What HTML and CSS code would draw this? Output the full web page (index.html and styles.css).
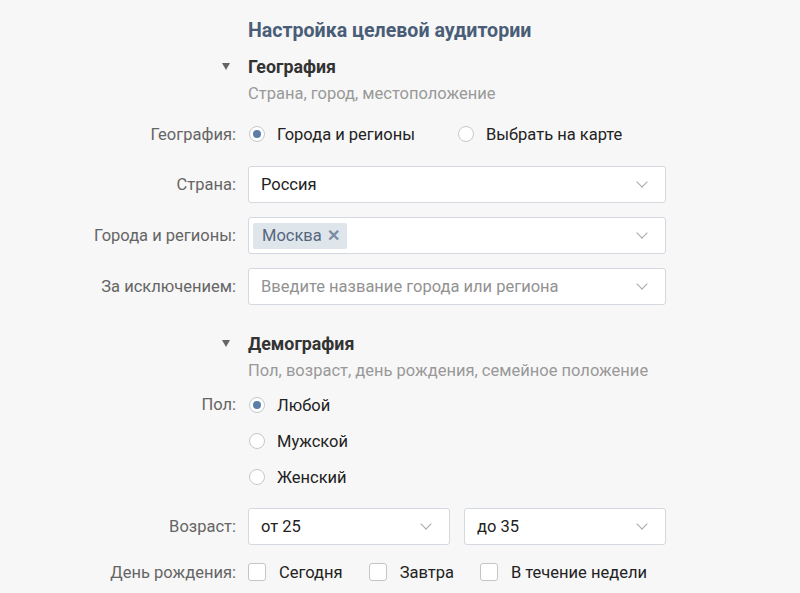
FILE: index.html
```html
<!DOCTYPE html>
<html>
<head>
    <title>Настройка целевой аудитории</title>
    <link rel="stylesheet" href="styles.css">
</head>
<body>
    <div class="page">
        <div class="row title-row">
            <div class="label"></div>
            <h1 class="title">Настройка целевой аудитории</h1>
        </div>

        <div class="row section-head">
            <div class="label"><span class="arrow"></span></div>
            <div class="section-name">География</div>
        </div>
        <div class="row section-sub">
            <div class="label"></div>
            <div class="hint">Страна, город, местоположение</div>
        </div>

        <div class="row line geo-type">
            <div class="label">География:</div>
            <div class="options">
                <label class="radio checked"><span class="circle"></span>Города и регионы</label>
                <label class="radio"><span class="circle"></span>Выбрать на карте</label>
            </div>
        </div>

        <div class="row field country">
            <div class="label">Страна:</div>
            <div class="select"><span class="value">Россия</span><span class="chevron"></span></div>
        </div>

        <div class="row field cities">
            <div class="label">Города и регионы:</div>
            <div class="select tags"><span class="tag">Москва<span class="tag-x">✕</span></span><span class="chevron"></span></div>
        </div>

        <div class="row field except">
            <div class="label">За исключением:</div>
            <div class="select"><span class="value placeholder">Введите название города или региона</span><span class="chevron"></span></div>
        </div>

        <div class="row section-head demo">
            <div class="label"><span class="arrow"></span></div>
            <div class="section-name">Демография</div>
        </div>
        <div class="row section-sub">
            <div class="label"></div>
            <div class="hint">Пол, возраст, день рождения, семейное положение</div>
        </div>

        <div class="row line sex">
            <div class="label">Пол:</div>
            <div class="stack">
                <label class="radio checked"><span class="circle"></span>Любой</label>
                <label class="radio"><span class="circle"></span>Мужской</label>
                <label class="radio"><span class="circle"></span>Женский</label>
            </div>
        </div>

        <div class="row field age">
            <div class="label">Возраст:</div>
            <div class="pair">
                <div class="select"><span class="value">от 25</span><span class="chevron"></span></div>
                <div class="select"><span class="value">до 35</span><span class="chevron"></span></div>
            </div>
        </div>

        <div class="row line birthday">
            <div class="label">День рождения:</div>
            <div class="options">
                <label class="check"><span class="box"></span>Сегодня</label>
                <label class="check"><span class="box"></span>Завтра</label>
                <label class="check"><span class="box"></span>В течение недели</label>
            </div>
        </div>
    </div>
</body>
</html>
```

FILE: styles.css
```css
body {
    margin: 0;
    background-color: #f7f7f7;
    font-family: Roboto, "Liberation Sans", sans-serif;
    font-size: 16.5px;
    color: #222;
}

.page {
    width: 666px;
    padding-top: 19px;
}

.row {
    display: flex;
    align-items: center;
    gap: 12px;
    white-space: nowrap;
}

.label {
    width: 236px;
    flex-shrink: 0;
    text-align: right;
    color: #656565;
}

.title {
    margin: 0;
    font-size: 19.6px;
    line-height: 24px;
    font-weight: bold;
    color: #4a5d78;
}

.section-head {
    margin-top: 12px;
    height: 22px;
}

.section-head.demo {
    margin-top: 27px;
}

.section-head .label {
    display: flex;
    justify-content: flex-end;
    padding-right: 6px;
    box-sizing: border-box;
}

.arrow {
    width: 0;
    height: 0;
    border-left: 4px solid transparent;
    border-right: 4px solid transparent;
    border-top: 7px solid #656565;
}

.section-name {
    font-size: 17.8px;
    font-weight: bold;
    color: #333;
}

.section-sub {
    margin-top: 6px;
    height: 20px;
}

.hint {
    color: #999;
}

.line {
    height: 24px;
}

.geo-type {
    margin-top: 19px;
}

.options {
    display: flex;
    align-items: center;
}

.radio {
    display: flex;
    align-items: center;
    gap: 12px;
    height: 24px;
    margin-right: 42px;
}

.circle {
    width: 14px;
    height: 14px;
    border: 1px solid #c3c9d0;
    border-radius: 50%;
    background: #fff;
    margin-left: 1px;
    position: relative;
}

.radio.checked .circle::after {
    content: "";
    position: absolute;
    left: 3px;
    top: 3px;
    width: 8px;
    height: 8px;
    border-radius: 50%;
    background: #5b7ea8;
}

.field {
    margin-top: 14px;
}

.country {
    margin-top: 20px;
}

.select {
    flex: 1;
    height: 37px;
    box-sizing: border-box;
    border: 1px solid #d3d9de;
    border-radius: 3px;
    background: #fff;
    display: flex;
    align-items: center;
    padding: 0 19px 0 12px;
}

.value {
    flex: 1;
}

.placeholder {
    color: #929292;
}

.chevron {
    width: 7px;
    height: 7px;
    border-right: 1px solid #a8a8a8;
    border-bottom: 1px solid #a8a8a8;
    transform: rotate(45deg);
    margin-top: -5px;
}

.tags {
    padding-left: 4px;
}

.tag {
    height: 26px;
    background: #dee5eb;
    color: #55677d;
    border-radius: 2px;
    padding: 0 7px 0 9px;
    display: flex;
    align-items: center;
    gap: 5px;
    margin-right: auto;
}

.tag-x {
    font-size: 16px;
    color: #7b8da2;
    font-weight: bold;
}

.sex {
    height: auto;
    margin-top: 13px;
    align-items: flex-start;
}

.sex .label {
    line-height: 24px;
}

.stack {
    display: flex;
    flex-direction: column;
    gap: 12px;
}

.age {
    margin-top: 19px;
}

.pair {
    flex: 1;
    display: flex;
    gap: 14px;
}

.birthday {
    margin-top: 15px;
}

.check {
    display: flex;
    align-items: center;
    gap: 13px;
    margin-right: 26px;
}

.box {
    width: 16px;
    height: 16px;
    border: 1px solid #c5c5c5;
    border-radius: 3px;
    background: #fff;
}
```
